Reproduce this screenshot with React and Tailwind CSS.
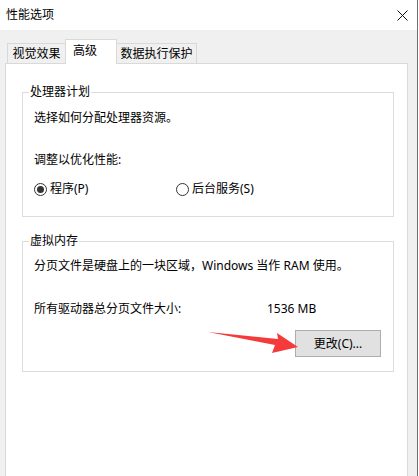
import { useState } from 'react'

const font = { fontFamily: '"Segoe UI", "Noto Sans", "Noto Sans CJK SC", sans-serif' }

function Radio({ checked, label, onClick }) {
  return (
    <label className="flex items-center gap-[3px] cursor-default" onClick={onClick}>
      <span className="w-[13px] h-[13px] rounded-full border border-[#333] flex items-center justify-center bg-white">
        {checked && <span className="w-[7px] h-[7px] rounded-full bg-[#333]" />}
      </span>
      <span>{label}</span>
    </label>
  )
}

export default function App() {
  const [mode, setMode] = useState('program')

  return (
    <div className="relative w-[419px] h-[476px] overflow-hidden bg-white text-[12px] leading-[16px] text-black" style={font}>
      <div className="w-[418px] h-full flex flex-col border-r border-[#6e6e6e]">
        {/* Title bar */}
        <div className="h-[30px] flex items-center justify-between pl-[6px] pr-[9px] bg-white flex-shrink-0">
          <span className="text-[12px]">性能选项</span>
          <svg width="11" height="11" viewBox="0 0 11 11" className="mt-px">
            <path d="M0.5 0.5 L10.5 10.5 M10.5 0.5 L0.5 10.5" stroke="#111" strokeWidth="1" />
          </svg>
        </div>

        {/* Body */}
        <div className="flex-1 bg-[#f0f0f0] pt-[9px] pl-[5px]">
          {/* Tabs */}
          <div className="flex items-end pl-[2px] h-[24px] relative z-10">
            <div className="w-[59px] h-[20px] border border-b-0 border-[#d9d9d9] bg-[#f0f0f0] flex items-center justify-center pt-[1px]">
              视觉效果
            </div>
            <div className="w-[52px] h-[25px] -ml-px -mb-px border border-b-0 border-[#d9d9d9] bg-white flex items-start pl-[7px] pt-[3px]">
              高级
            </div>
            <div className="w-[81px] h-[20px] -ml-px border border-b-0 border-[#d9d9d9] bg-[#f0f0f0] flex items-center justify-center pt-[1px]">
              数据执行保护
            </div>
          </div>

          {/* Tab page */}
          <div className="w-[403px] h-[420px] bg-white border border-[#d9d9d9] pt-[20px] pl-[16px]">
            <fieldset className="w-[372px] border border-[#dcdcdc] pl-[11px] pt-[10px] pb-[19px]">
              <legend className="-ml-[5px] px-[1px]">处理器计划</legend>
              <p>选择如何分配处理器资源。</p>
              <p className="mt-[26px]">调整以优化性能:</p>
              <div className="mt-[13px] flex items-center">
                <div className="w-[142px]">
                  <Radio checked={mode === 'program'} label="程序(P)" onClick={() => setMode('program')} />
                </div>
                <Radio checked={mode === 'service'} label="后台服务(S)" onClick={() => setMode('service')} />
              </div>
            </fieldset>

            <fieldset className="w-[372px] mt-[16px] border border-[#dcdcdc] pl-[11px] pr-[12px] pt-[9px] pb-[14px]">
              <legend className="-ml-[5px] px-[1px]">虚拟内存</legend>
              <p>分页文件是硬盘上的一块区域，Windows 当作 RAM 使用。</p>
              <div className="mt-[27px] flex">
                <span className="w-[233px]">所有驱动器总分页文件大小:</span>
                <span>1536 MB</span>
              </div>
              <div className="mt-[13px] flex justify-end">
                <button className="w-[86px] h-[27px] border border-[#adadad] bg-[#e1e1e1] flex items-center justify-center">
                  更改(C)...
                </button>
              </div>
            </fieldset>
          </div>
        </div>
      </div>

      {/* Red annotation arrow */}
      <svg className="absolute left-0 top-0 pointer-events-none" width="419" height="476">
        <polygon
          points="208,332 278,339 277,333 298,347 272,353 275,345"
          fill="#f43a3a"
        />
      </svg>
    </div>
  )
}
